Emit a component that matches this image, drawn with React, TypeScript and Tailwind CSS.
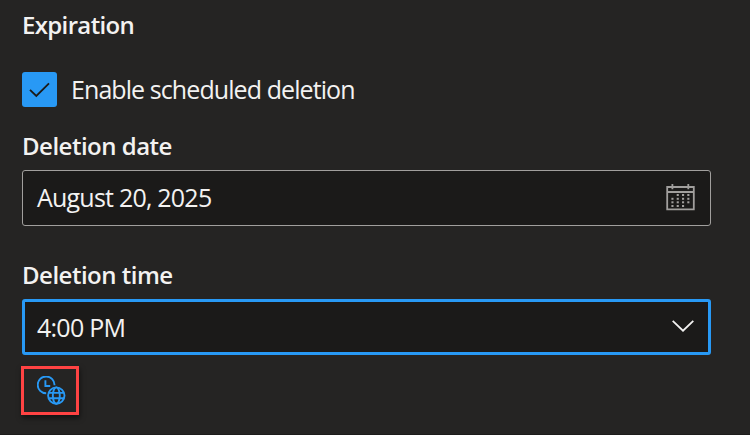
import React from "react";

const dots: [number, number][] = [
  [11, 11], [16.3, 11], [21.6, 11],
  [5.7, 14.8], [11, 14.8], [16.3, 14.8], [21.6, 14.8],
  [5.7, 18.3], [11, 18.3], [16.3, 18.3], [21.6, 18.3],
  [5.7, 22], [11, 22], [16.3, 22],
];

function CalendarIcon() {
  return (
    <svg className="mb-px" width="29" height="27" viewBox="0 0 29 27" fill="none" stroke="#a19f9d">
      <path d="M1.2 3H27.8V25.3H1.2Z" strokeWidth="1.8" />
      <path d="M1 8H28M6.4 0V5.3M22.3 0V5.3" strokeWidth="1.8" />
      {dots.map(([x, y]) => (
        <rect key={`${x}-${y}`} x={x - 0.3} y={y - 1} width="2.1" height="2" fill="#a19f9d" stroke="none" />
      ))}
    </svg>
  );
}

function ClockGlobeIcon() {
  return (
    <svg className="ml-[3px]" width="30" height="30" viewBox="0 0 30 30" fill="none" stroke="#2899f5" strokeWidth="1.9">
      <path d="M9.2 17.3A8.4 8.4 0 1 1 17.5 9.2" />
      <path d="M8.4 4.2V10H13.2" />
      <circle cx="19.3" cy="19.6" r="8.2" />
      <ellipse cx="19.3" cy="19.6" rx="3.5" ry="8.2" />
      <path d="M11.5 16.9H27.1M11.5 22.3H27.1" />
    </svg>
  );
}

export default function App() {
  return (
    <main className="flex h-[435px] w-[750px] flex-col items-start overflow-hidden border-b border-[#1d1c1b] bg-[#252423] pl-[22px] font-['Open_Sans','Noto_Sans',sans-serif] text-[25px] leading-8 whitespace-nowrap text-[#f3f2f1]">
      <h2 className="mt-[9px] text-[24px] font-semibold tracking-[-0.65px]">Expiration</h2>

      <label className="mt-[31px] flex h-[35px] items-center gap-[14px]">
        <span className="flex size-[35px] items-center justify-center rounded-[3px] bg-[#2899f5]">
          <svg width="21" height="16" viewBox="0 0 21 16" fill="none" stroke="#1b1a19" strokeWidth="1.8">
            <path d="M1 7.8L7.3 14L20 1.3" />
          </svg>
        </span>
        <span className="pb-[2px] tracking-[-0.92px]">Enable scheduled deletion</span>
      </label>

      <div className="mt-[23px] text-[24px] font-semibold tracking-[-0.5px]">Deletion date</div>
      <div className="mt-2 flex h-14 w-[689px] items-center justify-between rounded-[3px] border border-[#a19f9d] bg-[#1b1a19] pr-[15px] pl-[14px]">
        <span className="pb-[2px] tracking-[-0.78px]">August 20, 2025</span>
        <CalendarIcon />
      </div>

      <div className="mt-[33px] text-[24px] font-semibold tracking-[-0.5px]">Deletion time</div>
      <div className="mt-2 flex h-14 w-[689px] items-center justify-between rounded-[3px] border-[3px] border-[#2899f5] bg-[#1b1a19] pr-[14px] pl-3">
        <span className="pb-px tracking-[-0.75px]">4:00 PM</span>
        <svg className="mb-[2px]" width="22" height="12" viewBox="0 0 22 12" fill="none" stroke="#f3f2f1" strokeWidth="1.8">
          <path d="M0.7 0.8L11 10.7L21.3 0.8" />
        </svg>
      </div>

      <div className="mt-[11px] -ml-px flex h-[49px] w-[58px] items-center justify-center border-[3px] border-[#ff4343] shadow-[1px_3px_5px_rgba(0,0,0,0.5)]">
        <ClockGlobeIcon />
      </div>
    </main>
  );
}
